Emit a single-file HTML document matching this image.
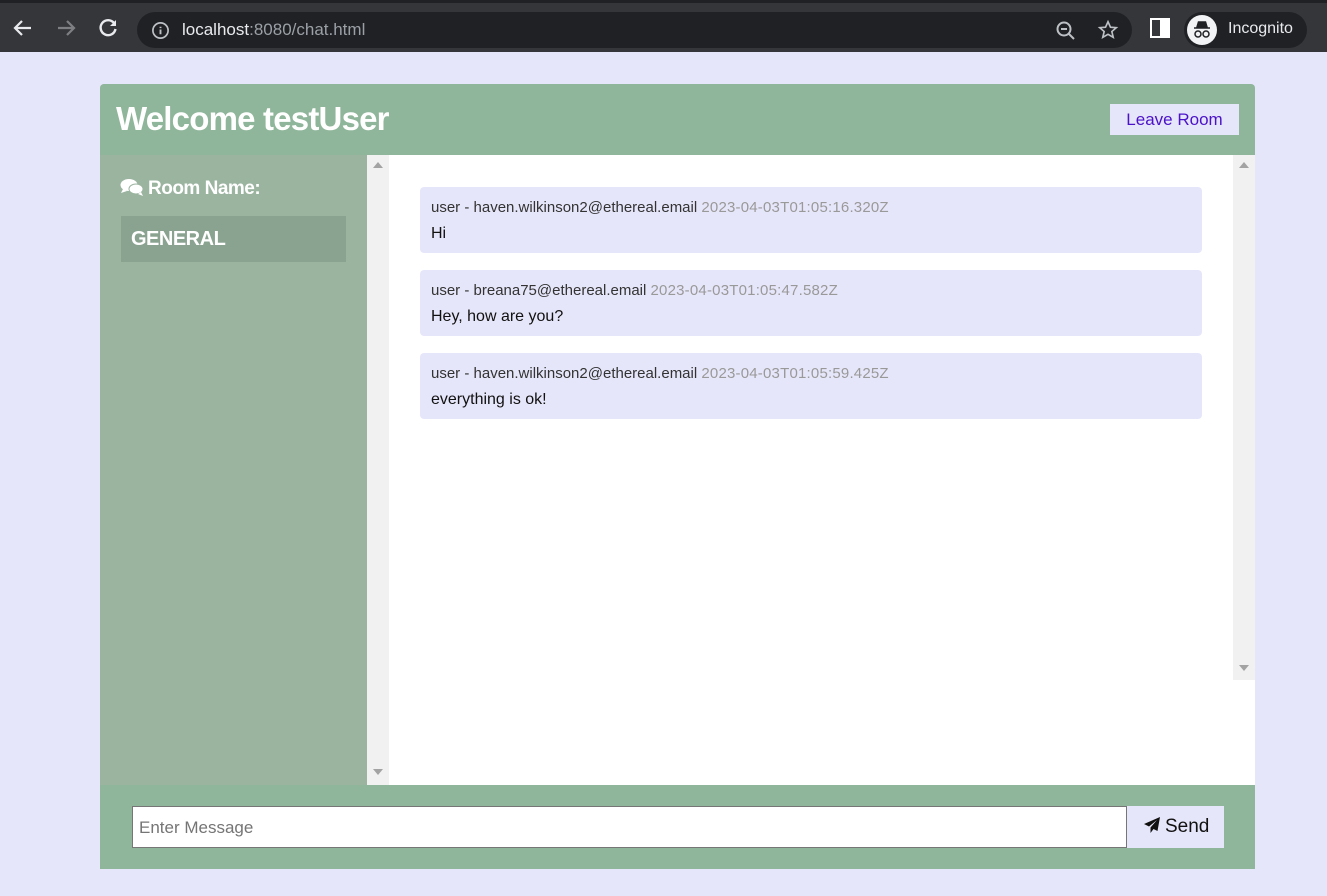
<!DOCTYPE html>
<html><head><meta charset="utf-8"><style>
*{margin:0;padding:0;box-sizing:border-box}
body{width:1327px;height:896px;background:#e6e6fa;font-family:"Liberation Sans",sans-serif;position:relative;overflow:hidden}
.chrome{position:absolute;left:0;top:0;width:1327px;height:52px;background:#35363a;border-top:3px solid #202124}
.url{position:absolute;left:137px;top:9px;width:995px;height:36px;border-radius:18px;background:#202124}
.url .t{position:absolute;left:45px;top:8px;font-size:17px;color:#e8eaed}
.url .t span{color:#9aa0a6}
.inc{position:absolute;left:1184px;top:9px;width:123px;height:36px;border-radius:18px;background:#202124}
.inc .t{position:absolute;left:44px;top:8px;color:#e8eaed;font-size:16px}
.box{position:absolute;left:100px;top:84px;width:1155px;height:785px;background:#8fb59a;border-radius:4px 4px 0 0}
.hdr{position:absolute;left:16px;top:16px;font-size:33px;font-weight:bold;color:#fff;letter-spacing:-0.8px}
.leave{position:absolute;left:1010px;top:20px;width:129px;height:31px;background:#e6e6fa;color:#4b12c9;font-size:17px;text-align:center;line-height:31px}
.side{position:absolute;left:0;top:71px;width:267px;height:630px;background:#9bb4a0}
.rn{position:absolute;left:20px;top:23px;color:#fff;font-weight:bold;font-size:19px;letter-spacing:-0.5px}
.gen{position:absolute;left:21px;top:61px;width:225px;height:46px;background:#8aa390;color:#fff;font-weight:bold;font-size:20px;line-height:46px;padding-left:10px;letter-spacing:-0.5px}
.sb1{position:absolute;left:267px;top:71px;width:22px;height:630px;background:#f1f1f1}
.main{position:absolute;left:289px;top:71px;width:866px;height:630px;background:#fff}
.sb2{position:absolute;left:844px;top:0;width:22px;height:525px;background:#f1f1f1}
.up,.dn{position:absolute;width:0;height:0;border-left:5px solid transparent;border-right:5px solid transparent}
.up{border-bottom:6px solid #a3a3a3}.dn{border-top:6px solid #a3a3a3}
.msg{position:absolute;left:31px;width:782px;height:66px;background:#e6e6fa;border-radius:4px;padding:12px 11px}
.msg .a{font-size:15px;color:#333}
.msg .a span{color:#999;letter-spacing:0.2px}
.msg .b{font-size:16px;color:#111;margin-top:9px}
.inp{position:absolute;left:32px;top:722px;width:995px;height:42px;background:#fff;border:1px solid #767676;font-size:17px;color:#757575;padding:11px 6px}
.send{position:absolute;left:1027px;top:722px;width:97px;height:42px;background:#e6e6fa;font-size:19px;color:#111;line-height:42px;padding-left:16px}
</style></head><body>
<div class="chrome">
<svg style="position:absolute;left:12px;top:14px" width="22" height="22" viewBox="0 0 22 22"><path d="M19 11H4M10 4l-7 7 7 7" stroke="#e8eaed" stroke-width="2.2" fill="none"/></svg>
<svg style="position:absolute;left:55px;top:14px" width="22" height="22" viewBox="0 0 22 22"><path d="M3 11h15M12 4l7 7-7 7" stroke="#7d7f83" stroke-width="2.2" fill="none"/></svg>
<svg style="position:absolute;left:97px;top:14px" width="22" height="22" viewBox="0 0 22 22"><path d="M17 6A7.5 7.5 0 1 0 18.5 12" stroke="#e8eaed" stroke-width="2.4" fill="none"/><path d="M19 3v6h-6z" fill="#e8eaed"/></svg>
<div class="url"><svg style="position:absolute;left:14px;top:9px" width="19" height="19" viewBox="0 0 20 20"><circle cx="10" cy="10" r="8" stroke="#bdc1c6" stroke-width="1.8" fill="none"/><path d="M10 9v5M10 6v1.5" stroke="#bdc1c6" stroke-width="2"/></svg>
<div class="t">localhost<span>:8080/chat.html</span></div>
<svg style="position:absolute;left:918px;top:8px" width="22" height="22" viewBox="0 0 22 22"><circle cx="9" cy="9" r="6.5" stroke="#bdc1c6" stroke-width="2" fill="none"/><path d="M6 9h6M14 14l5 5" stroke="#bdc1c6" stroke-width="2"/></svg>
<svg style="position:absolute;left:960px;top:7px" width="22" height="22" viewBox="0 0 24 24"><path d="M12 3l2.7 6 6.3.5-4.8 4.2 1.5 6.3L12 16.7 6.3 20l1.5-6.3L3 9.5 9.3 9z" stroke="#bdc1c6" stroke-width="1.8" fill="none"/></svg>
</div>
<svg style="position:absolute;left:1150px;top:15px" width="20" height="20" viewBox="0 0 20 20"><rect x="1" y="1" width="18" height="18" fill="none" stroke="#fff" stroke-width="2"/><rect x="10" y="1" width="9" height="18" fill="#fff"/></svg>
<div class="inc"><svg style="position:absolute;left:3px;top:3px" width="30" height="30" viewBox="0 0 30 30"><circle cx="15" cy="15" r="15" fill="#f1f3f4"/><path d="M7 13h16M10 12l1.5-5h7l1.5 5z" stroke="#202124" stroke-width="1.5" fill="#202124"/><circle cx="11" cy="19" r="3" stroke="#202124" stroke-width="1.5" fill="none"/><circle cx="19" cy="19" r="3" stroke="#202124" stroke-width="1.5" fill="none"/></svg><div class="t">Incognito</div></div>
</div>
<div class="box">
<div class="hdr">Welcome testUser</div>
<div class="leave">Leave Room</div>
<div class="side">
<div class="rn"><svg width="24" height="18" viewBox="0 0 24 18" style="vertical-align:-2px;margin-right:4px"><ellipse cx="9" cy="7" rx="8.5" ry="6" fill="#fff"/><path d="M3 11l-2 4 6-2z" fill="#fff"/><ellipse cx="16" cy="11" rx="7" ry="5" fill="#fff" stroke="#9bb4a0" stroke-width="1"/><path d="M21 14l2 4-5-2z" fill="#fff"/></svg>Room Name:</div>
<div class="gen">GENERAL</div>
</div>
<div class="sb1"><div class="up" style="left:6px;top:7px"></div><div class="dn" style="left:6px;top:614px"></div></div>
<div class="main">
<div class="msg" style="top:32px"><div class="a">user - haven.wilkinson2@ethereal.email <span>2023-04-03T01:05:16.320Z</span></div><div class="b">Hi</div></div>
<div class="msg" style="top:115px"><div class="a">user - breana75@ethereal.email <span>2023-04-03T01:05:47.582Z</span></div><div class="b">Hey, how are you?</div></div>
<div class="msg" style="top:198px"><div class="a">user - haven.wilkinson2@ethereal.email <span>2023-04-03T01:05:59.425Z</span></div><div class="b">everything is ok!</div></div>
<div class="sb2"><div class="up" style="left:6px;top:7px"></div><div class="dn" style="left:6px;top:510px"></div></div>
</div>
<div class="inp">Enter Message</div>
<div class="send"><svg width="18" height="18" viewBox="0 0 18 18" style="vertical-align:-2px;margin-right:4px"><path d="M17 1L1 8l5 2.5L14 4 7.5 11.5V17l3-4 4 2z" fill="#111"/></svg>Send</div>
</div>
</body></html>
